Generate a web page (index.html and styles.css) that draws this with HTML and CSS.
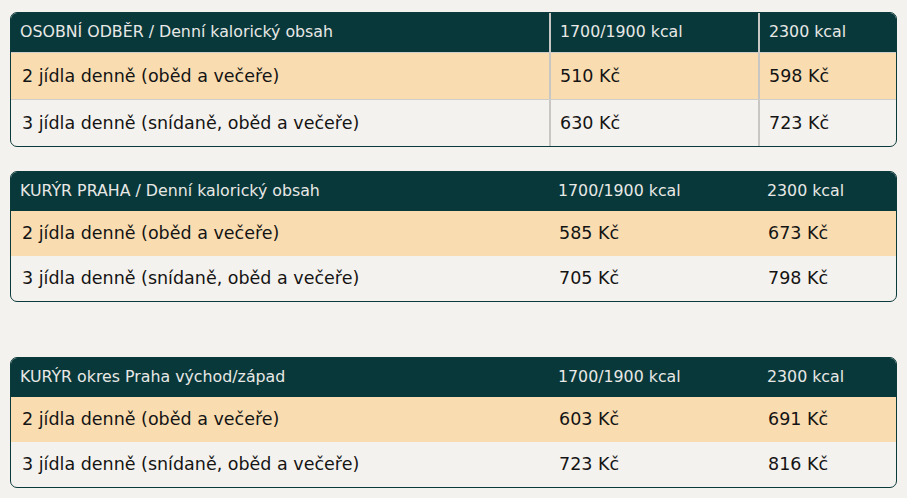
FILE: index.html
```html
<!DOCTYPE html>
<html lang="cs">
<head>
<meta charset="utf-8">
<title>Ceník</title>
<link rel="stylesheet" href="styles.css">
</head>
<body>
<div class="page">
  <div class="price-table lined">
    <div class="row head">
      <div class="cell">OSOBNÍ ODBĚR / Denní kalorický obsah</div>
      <div class="cell">1700/1900 kcal</div>
      <div class="cell">2300 kcal</div>
    </div>
    <div class="row hl">
      <div class="cell">2 jídla denně (oběd a večeře)</div>
      <div class="cell">510 Kč</div>
      <div class="cell">598 Kč</div>
    </div>
    <div class="row">
      <div class="cell">3 jídla denně (snídaně, oběd a večeře)</div>
      <div class="cell">630 Kč</div>
      <div class="cell">723 Kč</div>
    </div>
  </div>

  <div class="price-table gap-sm">
    <div class="row head">
      <div class="cell">KURÝR PRAHA / Denní kalorický obsah</div>
      <div class="cell">1700/1900 kcal</div>
      <div class="cell">2300 kcal</div>
    </div>
    <div class="row hl">
      <div class="cell">2 jídla denně (oběd a večeře)</div>
      <div class="cell">585 Kč</div>
      <div class="cell">673 Kč</div>
    </div>
    <div class="row">
      <div class="cell">3 jídla denně (snídaně, oběd a večeře)</div>
      <div class="cell">705 Kč</div>
      <div class="cell">798 Kč</div>
    </div>
  </div>

  <div class="price-table gap-lg">
    <div class="row head">
      <div class="cell">KURÝR okres Praha východ/západ</div>
      <div class="cell">1700/1900 kcal</div>
      <div class="cell">2300 kcal</div>
    </div>
    <div class="row hl">
      <div class="cell">2 jídla denně (oběd a večeře)</div>
      <div class="cell">603 Kč</div>
      <div class="cell">691 Kč</div>
    </div>
    <div class="row">
      <div class="cell">3 jídla denně (snídaně, oběd a večeře)</div>
      <div class="cell">723 Kč</div>
      <div class="cell">816 Kč</div>
    </div>
  </div>
</div>
</body>
</html>
```

FILE: styles.css
```css
html, body {
  margin: 0;
  padding: 0;
  background: #f4f2ee;
}

body {
  font-family: "DejaVu Sans", "Liberation Sans", sans-serif;
  color: #141414;
}

.page {
  padding: 12px 10px 0 10px;
}

.price-table {
  border: 1px solid #0b3a3a;
  border-radius: 7px;
  overflow: hidden;
  background: #f4f2ee;
}

.gap-sm { margin-top: 24px; }
.gap-lg { margin-top: 55px; }

.row {
  display: grid;
  grid-template-columns: 538px 209px 1fr;
  height: 45px;
  align-items: stretch;
}

.row .cell {
  display: flex;
  align-items: center;
  font-size: 17.5px;
  padding-left: 10px;
  padding-bottom: 1px;
  white-space: nowrap;
}

.row .cell:first-child {
  padding-left: 11px;
}

.row.head {
  height: 39px;
  background: #08383a;
  color: #e8e8e6;
}

.row.head .cell {
  font-size: 15.8px;
  padding-bottom: 3px;
  padding-left: 9px;
}

.row.head .cell:first-child {
  padding-left: 9px;
}

.row.hl {
  background: #f9ddb1;
}

/* first table has grey grid lines */
.lined .row {
  border-top: 1px solid #cfcdc9;
}

.lined .row.head {
  border-top: 0;
  height: 39px;
}

.lined .row .cell + .cell {
  border-left: 2px solid #c9c7c3;
  padding-left: 9px;
}

.lined .row.hl,
.lined .row:last-child {
  height: 46px;
}
```
